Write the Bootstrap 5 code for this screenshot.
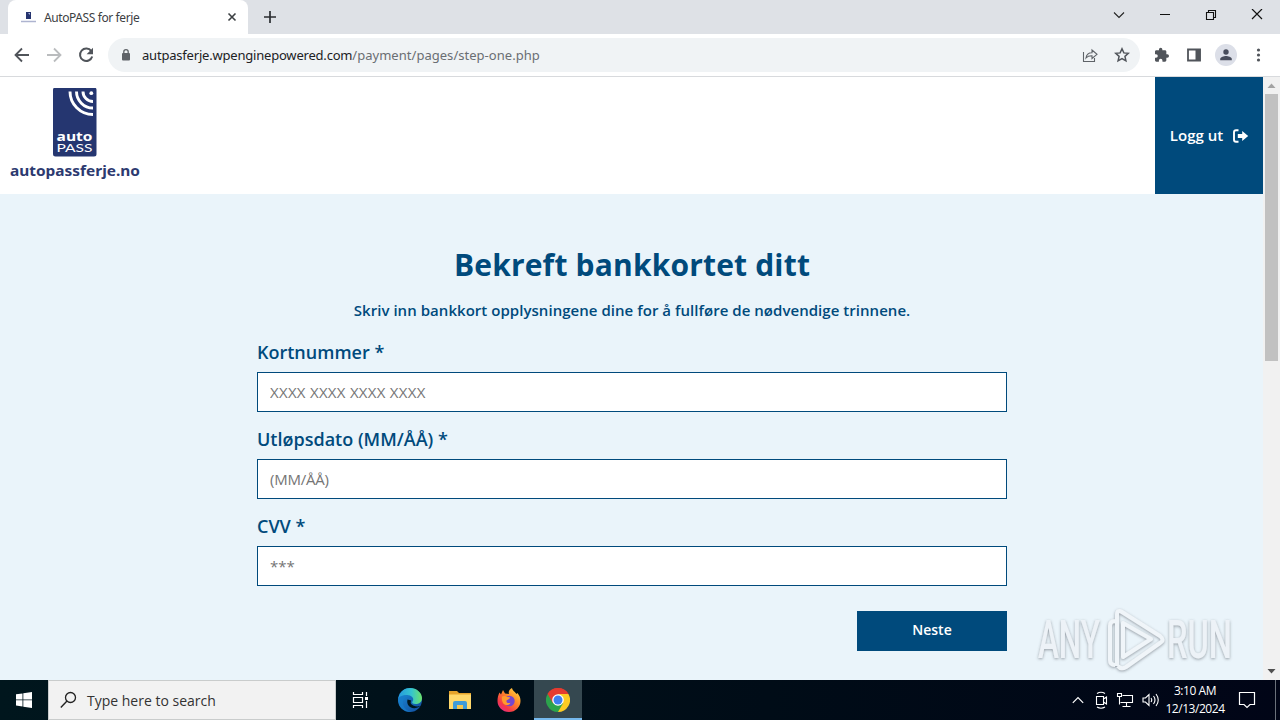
<!DOCTYPE html>
<html lang="no">
<head>
    <meta charset="UTF-8">
    <meta name="viewport" content="width=device-width, initial-scale=1.0">
    <title>AutoPASS for ferje</title>
    <link href="https://cdn.jsdelivr.net/npm/bootstrap@5.3.0/dist/css/bootstrap.min.css" rel="stylesheet">
    <style>
        body { width: 1280px; height: 720px; overflow: hidden; font-family: "Open Sans", sans-serif; color: #004a7c; }
        svg { display: block; flex: none; }
        /* browser */
        .tabstrip { height: 34px; background: #dee1e6; padding-left: 8px; }
        .browser-tab { width: 240px; height: 34px; background: #fff; border-radius: 8px 8px 0 0; padding: 0 10px 0 13px; font: 12px "Noto Sans", sans-serif; color: #3c4043; }
        .tab-title { letter-spacing: -.4px; margin-left: 8px; }
        .win-buttons { gap: 32px; padding-right: 16px; }
        .toolbar { height: 43px; background: #fff; border-bottom: 1px solid #d8dadd; padding: 0 14px; }
        .address { width: 1032px; height: 34px; border-radius: 17px; background: #f0f3f5; margin-left: 14px; padding: 0 10px 0 12px; font: 13px "Noto Sans", sans-serif; color: #202124; }
        .url { margin-left: 10px; white-space: nowrap; letter-spacing: -.2px; }
        .url span { color: #6a6e73; letter-spacing: .03px; }
        .profile { width: 22px; height: 22px; background: #dcdfe8; }
        .puzzle { margin-right: 1px; }
        /* page */
        .page { height: 603px; }
        .content { width: 1263px; background: #eaf4fa; }
        .site-header { height: 117px; background: #fff; }
        .logo { padding: 11px 0 0 9px; width: 160px; }
        .logout { width: 108px; background: #004a7c; color: #fff; font-size: 15px; font-weight: 600; gap: 9px; padding-left: 1px; }
        .card-form { width: 750px; margin-left: 257px; padding-top: 51px; }
        .card-form h1 { font-size: 30px; line-height: 40px; font-weight: 700; letter-spacing: .17px; margin: 0 0 14px; }
        .intro { font-size: 15px; line-height: 22px; font-weight: 600; letter-spacing: .04px; margin: 0 0 18px; white-space: nowrap; }
        .card-form label { display: block; font-size: 18px; line-height: 26px; font-weight: 600; margin-bottom: 7px; }
        .card-form .form-control { height: 40px; border: 1px solid #004a7c; font-size: 15px; padding: 0 12px; margin-bottom: 14px; background: #fff; }
        .card-form .form-control::placeholder { color: #757575; }
        .card-form .number-field::placeholder { letter-spacing: .28px; }
        .card-form .date-field::placeholder { letter-spacing: -.25px; }
        .next { width: 150px; height: 40px; margin-top: 11px; background: #004a7c; color: #fff; font-size: 14px; font-weight: 600; line-height: 38px; }
        .next span { display: block; padding-bottom: 2px; }
        .scroll { width: 17px; background: #f1f1f1; }
        .scroll-thumb { width: 13px; height: 267px; background: #c1c1c1; }
        .watermark { left: 1034px; top: 604px; }
        /* taskbar */
        .taskbar { height: 40px; background: linear-gradient(90deg, #00161d, #000c17 60%, #010517); color: #fff; font-family: "Open Sans", sans-serif; }
        .start { width: 48px; }
        .search { width: 288px; background: #f2f2f2; border: 1px solid #c9cccc; color: #333; font-size: 14px; padding-left: 11px; }
        .search span { margin-left: 10px; white-space: nowrap; }
        .task { width: 49.5px; }
        .task-active { width: 48px; background: #354850; border-bottom: 2px solid #76b9ed; padding-top: 2px; }
        .clock { width: 64px; font-size: 12px; line-height: 18px; letter-spacing: -.45px; margin: 0 11px 0 3px; white-space: nowrap; }
        .show-desktop { width: 5px; margin-left: 19px; border-left: 1px solid #6b717b; }
    </style>
</head>
<body class="d-flex flex-column">
    <div class="tabstrip d-flex justify-content-between">
        <div class="d-flex align-items-center">
            <div class="browser-tab d-flex align-items-center">
                <svg width="15" height="14"><path d="M5 2h5v7H5z" fill="#26346f"/><path d="M7 3h2v2z" fill="#aab3dd"/><path d="M0 11.500h15" stroke="#aeb4d0" stroke-width="1.500"/></svg>
                <span class="tab-title">AutoPASS for ferje</span>
                <svg class="ms-auto" width="12" height="12"><path d="M2.500 2.500l7 7m0-7l-7 7" stroke="#3c4043" stroke-width="1.600"/></svg>
            </div>
            <svg class="ms-3" width="12" height="12"><path d="M6 0v12M0 6h12" stroke="#2b2d31" stroke-width="1.700"/></svg>
        </div>
        <div class="win-buttons d-flex align-items-center pb-1">
            <svg width="14" height="12"><path d="M2 3.500l5 5 5-5" fill="none" stroke="#222" stroke-width="1.100"/></svg>
            <svg width="14" height="12"><path d="M2 5.500h10" stroke="#111"/></svg>
            <svg width="14" height="12"><path d="M2.500 3.500h7v7h-7zM4.500 3.500v-2h7v7h-2" fill="none" stroke="#111" stroke-width="1.100"/></svg>
            <svg width="14" height="12"><path d="M2 0l10 10M12 0L2 10" stroke="#111" stroke-width="1.200"/></svg>
        </div>
    </div>
    <div class="toolbar d-flex align-items-center">
        <svg width="16" height="16"><path d="M15 8H2M8 1.500L1.500 8 8 14.500" fill="none" stroke="#50545a" stroke-width="1.800"/></svg>
        <svg class="ms-3" width="16" height="16"><path d="M1 8h13M8 1.500L14.500 8 8 14.500" fill="none" stroke="#babcbe" stroke-width="1.800"/></svg>
        <svg class="ms-3" width="16" height="16"><path d="M13.300 4.200A6.200 6.200 0 1 0 14.200 9.500" fill="none" stroke="#50545a" stroke-width="2"/><path d="M15 .8v6.400H8.600z" fill="#50545a"/></svg>
        <div class="address d-flex align-items-center">
            <svg width="12" height="14"><rect x="2" y="5" width="8" height="7.500" rx="1" fill="#5f6368"/><path d="M3.800 5.500V3.800a2.200 2.200 0 0 1 4.400 0v1.700" fill="none" stroke="#5f6368" stroke-width="1.300"/></svg>
            <div class="url">autpasferje.wpenginepowered.com<span>/payment/pages/step-one.php</span></div>
            <svg class="ms-auto" width="16" height="16"><path d="M1.500 5v9.500h11V11M4 11c.4-3.500 2.500-5.300 6-5.300V3l5 4.300-5 4.200V8.800C7.300 8.700 5.500 9.300 4 11z" fill="none" stroke="#5f6368" stroke-width="1.100"/></svg>
            <svg class="ms-3" width="16" height="16"><path d="M8 1.800l1.850 4.100 4.450.45-3.350 3L11.900 13.800 8 11.500l-3.900 2.300 1-4.450-3.400-3 4.450-.45z" fill="none" stroke="#50545a" stroke-width="1.500"/></svg>
        </div>
        <svg class="puzzle ms-auto" width="16" height="16" viewBox="-1 0 24 24"><path fill="#50545a" d="M20.500 11H19V7c0-1.100-.9-2-2-2h-4V3.500a2.500 2.500 0 0 0-5 0V5H4c-1.100 0-2 .9-2 2v3.800h1.500a2.700 2.700 0 0 1 0 5.400H2V20c0 1.100.9 2 2 2h3.800v-1.500a2.700 2.700 0 0 1 5.400 0V22H17c1.100 0 2-.9 2-2v-4h1.500a2.500 2.500 0 0 0 0-5z"/></svg>
        <svg class="ms-3" width="16" height="16"><path d="M2 2.500h12v11H2z" fill="#fff" stroke="#50545a" stroke-width="1.800"/><path d="M9.500 2h5v12h-5z" fill="#50545a"/></svg>
        <div class="profile rounded-circle d-flex align-items-center justify-content-center ms-auto me-auto">
            <svg width="14" height="14"><circle cx="7" cy="4" r="2.700" fill="#484d5c"/><path d="M1.200 12.300V11c0-2 3.800-3 5.800-3s5.800 1 5.800 3v1.300z" fill="#484d5c"/></svg>
        </div>
        <svg width="16" height="16"><g fill="#50545a"><circle cx="8.500" cy="3" r="1.600"/><circle cx="8.500" cy="8" r="1.600"/><circle cx="8.500" cy="13" r="1.600"/></g></svg>
    </div>

    <div class="page d-flex">
        <div class="content">
            <div class="site-header d-flex justify-content-between">
                <div class="logo">
                    <svg width="134" height="96">
                        <rect x="44" y="-.5" width="43.500" height="69" rx="2.500" fill="#253670"/>
                        <g fill="none" stroke="#fff" stroke-width="2.900"><path d="M61 3.500A23 23 0 0 0 84 26.500"/><path d="M67.500 3.500A16.500 16.500 0 0 0 84 20"/><path d="M74 3.500a10 10 0 0 0 10 10"/></g>
                        <circle cx="82.300" cy="5.200" r="1.900" fill="#fff"/>
                        <text x="47.500" y="52.500" textLength="36" lengthAdjust="spacingAndGlyphs" font-family="Open Sans" font-weight="700" font-size="13" fill="#fff">auto</text>
                        <text x="47.500" y="64" textLength="36" lengthAdjust="spacingAndGlyphs" font-family="Lato" font-size="12" fill="#fff">PASS</text>
                        <text x="1" y="88" textLength="130" lengthAdjust="spacingAndGlyphs" font-family="Noto Sans" font-weight="700" font-size="15" fill="#2d3a70">autopassferje.no</text>
                    </svg>
                </div>
                <div class="logout d-flex align-items-center justify-content-center">
                    <span>Logg ut</span>
                    <svg width="17" height="16"><path d="M6.500 2.300H4Q2 2.300 2 4.300v7.400q0 2 2 2h2.500" fill="none" stroke="#fff" stroke-width="1.900"/><path d="M5.800 6h4.400V3l6 5-6 5v-3H5.800z" fill="#fff"/></svg>
                </div>
            </div>
            <div class="card-form">
                <h1 class="text-center">Bekreft bankkortet ditt</h1>
                <p class="intro text-center">Skriv inn bankkort opplysningene dine for å fullføre de nødvendige trinnene.</p>
                <label>Kortnummer *</label>
                <input type="text" class="number-field form-control rounded-0" placeholder="XXXX XXXX XXXX XXXX" readonly>
                <label>Utløpsdato (MM/ÅÅ) *</label>
                <input type="text" class="date-field form-control rounded-0" placeholder="(MM/ÅÅ)" readonly>
                <label>CVV *</label>
                <input type="text" class="form-control rounded-0" placeholder="***" readonly>
                <div class="d-flex justify-content-end">
                    <button type="button" class="next btn rounded-0 border-0 p-0"><span>Neste</span></button>
                </div>
            </div>
        </div>
        <div class="scroll d-flex flex-column align-items-center">
            <svg width="17" height="17"><path d="M4.500 11l4-4.500 4 4.500z" fill="#a3a3a3"/></svg>
            <div class="scroll-thumb"></div>
            <svg class="mt-auto" width="17" height="17"><path d="M4.500 6l4 4.500 4-4.500z" fill="#505050"/></svg>
        </div>
    </div>

    <svg class="watermark position-absolute" width="210" height="74">
        <defs><filter id="soft" x="-10%" y="-10%" width="120%" height="120%"><feDropShadow dx="0" dy="1" stdDeviation="1.500" flood-color="#5f6670" flood-opacity=".85"/></filter></defs>
        <g filter="url(#soft)" opacity=".75">
            <g font-family="Roboto" font-weight="500" font-size="53" fill="#eef2f6">
                <text x="4" y="54" textLength="62" lengthAdjust="spacingAndGlyphs">ANY</text>
                <text x="133" y="54" textLength="65" lengthAdjust="spacingAndGlyphs">RUN</text>
            </g>
            <path d="M81 17q-5 0-5 5v34q0 5 5 5M83 62V11q0-6 5-3l38 24q5 4 0 7L92 63q-5 3-8-1M89 19v34l28-18z" fill="none" stroke="#f3f6f9" stroke-width="4" stroke-linejoin="round"/>
        </g>
    </svg>

    <div class="taskbar d-flex">
        <div class="start d-flex align-items-center justify-content-center">
            <svg width="16" height="16"><path d="M0 2.300l6.500-.9v6H0zM7.300 1.300L16 0v7.400H7.300zM0 8.300h6.500v6.200L0 13.600zM7.300 8.300H16V16l-8.700-1.300z" fill="#fff"/></svg>
        </div>
        <div class="search d-flex align-items-center">
            <svg width="17" height="18"><circle cx="10.500" cy="6.500" r="5" fill="none" stroke="#222" stroke-width="1.300"/><path d="M7 10L.8 16.500" stroke="#222" stroke-width="1.400"/></svg>
            <span>Type here to search</span>
        </div>
        <div class="task d-flex align-items-center justify-content-center">
            <svg width="17" height="16"><path d="M1.500 0v2.500h9V0M1.500 5.500h9v5h-9zM1.500 16v-2.500h9V16M14.500 0v4M14.500 9v7" fill="none" stroke="#fff" stroke-width="1.200"/><path d="M13 5h3v3h-3z" fill="#fff"/></svg>
        </div>
        <div class="task d-flex align-items-center justify-content-center">
            <svg width="24" height="24">
                <defs>
                    <linearGradient id="edgeTop"><stop stop-color="#2599de"/><stop offset=".55" stop-color="#35c4cf"/><stop offset="1" stop-color="#6ce26b"/></linearGradient>
                    <linearGradient id="edgeLow" x2="1" y2="1"><stop stop-color="#1c8fdc"/><stop offset="1" stop-color="#114b9b"/></linearGradient>
                </defs>
                <circle cx="12" cy="12" r="12" fill="url(#edgeLow)"/>
                <path d="M.3 10.500C2 3 7 0 12 0c7 0 12 5 12 10 0 4-3 6-6.500 6-3 0-4-1-3-2.500C17 10 13 7 9 7c-4 0-7 1.500-8.700 3.500z" fill="url(#edgeTop)"/>
                <path d="M9.500 11.500c-1.500 6 3.500 9.500 8 8.500 2-.4 3.500-1 4.700-2-2 .5-4 .7-7-.5-2.300-1-3.300-3-2-5z" fill="#00161d"/>
                <path d="M7 9.500C2 15 6 22 13 24 5 24 0 18 .2 11 1.500 7.500 8 6 12 9.500 10 8.800 8.500 8.800 7 9.500z" fill="#177cc9" opacity=".75"/>
            </svg>
        </div>
        <div class="task d-flex align-items-center justify-content-center">
            <svg width="22" height="20"><path d="M0 1h8l2 2h12v3H0z" fill="#e5a32b"/><path d="M0 4.500h22V19H0z" fill="#ffd86b"/><path d="M4 19v-6q0-2 2-2h10q2 0 2 2v6h-4v-4H8v4z" fill="#3f9bd8"/><path d="M8 15h6v4H8z" fill="#f4c64f"/></svg>
        </div>
        <div class="task d-flex align-items-center justify-content-center">
            <svg width="24" height="24">
                <defs><linearGradient id="fox" x1="1" y2="1" x2=".2"><stop stop-color="#ffe34a"/><stop offset=".45" stop-color="#ff8a28"/><stop offset=".8" stop-color="#f53848"/><stop offset="1" stop-color="#e32c8b"/></linearGradient></defs>
                <path d="M2.500 4.500l1.500 2L6 2l2 3.500 4 .5c-1-3 1-5 3-6 .5 3 3 3.500 4.500 6l1-1C22.500 7.500 23.500 10 23.500 13 23.500 19 18.500 24 12 24S.5 19 .5 13c0-3 .7-6 2-8.500z" fill="url(#fox)"/>
                <circle cx="12.500" cy="13" r="5.200" fill="#7446cf"/>
                <path d="M5 8.500q3-1 5 .5l3 .2c0 2-3 2.300-3.500 3.500-.5 2 2 3 4 2-1 3-5 3-7 1-1.500-2-2-5-1.500-7.200z" fill="#ff9c2c"/>
            </svg>
        </div>
        <div class="task-active d-flex align-items-center justify-content-center">
            <svg width="24" height="24" viewBox="-12 -12 24 24"><path d="M0 0L-10.400-6A12 12 0 0 1 10.400-6z" fill="#e53b30"/><path d="M0 0L10.400-6A12 12 0 0 1 0 12z" fill="#fccb24"/><path d="M0 0V12A12 12 0 0 1-10.400-6z" fill="#2ca34c"/><path d="M0-6h10.400L5.200 3z" fill="#fccb24"/><path d="M-10.400-6L-5.200 3 0-6z" fill="#e53b30"/><path d="M-5.200 3L0 12l5.200-9z" fill="#2ca34c"/><path d="M-10.400-6A12 12 0 0 1 10.400-6H0z" fill="#e53b30"/><circle r="5.800" fill="#fff"/><circle r="4.500" fill="#3d7ff0"/></svg>
        </div>
        <div class="d-flex align-items-center ms-auto">
            <svg width="12" height="12"><path d="M.8 8.800L6 3.600l5.200 5.200" fill="none" stroke="#fff" stroke-width="1.200"/></svg>
            <svg class="ms-2 me-1" width="20" height="18"><path d="M4.500 5.500h7v8h-7zM11.500 8l3-2v7l-3-2M5 2.500q4-2.500 8 0M5 16q4 2.500 8 0" fill="none" stroke="#fff" stroke-width="1.100"/></svg>
            <svg class="me-2" width="18" height="16"><path d="M6.500 3.500h10v7h-12M1.500 1.500h4v3h-4zM3.500 4.500v8M10.500 10.500v4M6.500 14.500h8" fill="none" stroke="#fff" stroke-width="1.100"/></svg>
            <svg width="18" height="16"><path d="M1 6h2.500L7 2.500v11L3.500 10H1zM9 6q1.500 2 0 4M11.500 4q3 4 0 8M14 2q4.500 6 0 12" fill="none" stroke="#fff" stroke-width="1.100"/></svg>
            <div class="clock text-center">3:10 AM<br>12/13/2024</div>
            <svg width="18" height="18"><path d="M1.500 1.500h15v12h-4.500L9 16.500l-3-3H1.500z" fill="none" stroke="#fff" stroke-width="1.200"/></svg>
            <div class="show-desktop h-100"></div>
        </div>
    </div>
    <script src="https://cdn.jsdelivr.net/npm/bootstrap@5.3.0/dist/js/bootstrap.bundle.min.js"></script>
</body>
</html>
